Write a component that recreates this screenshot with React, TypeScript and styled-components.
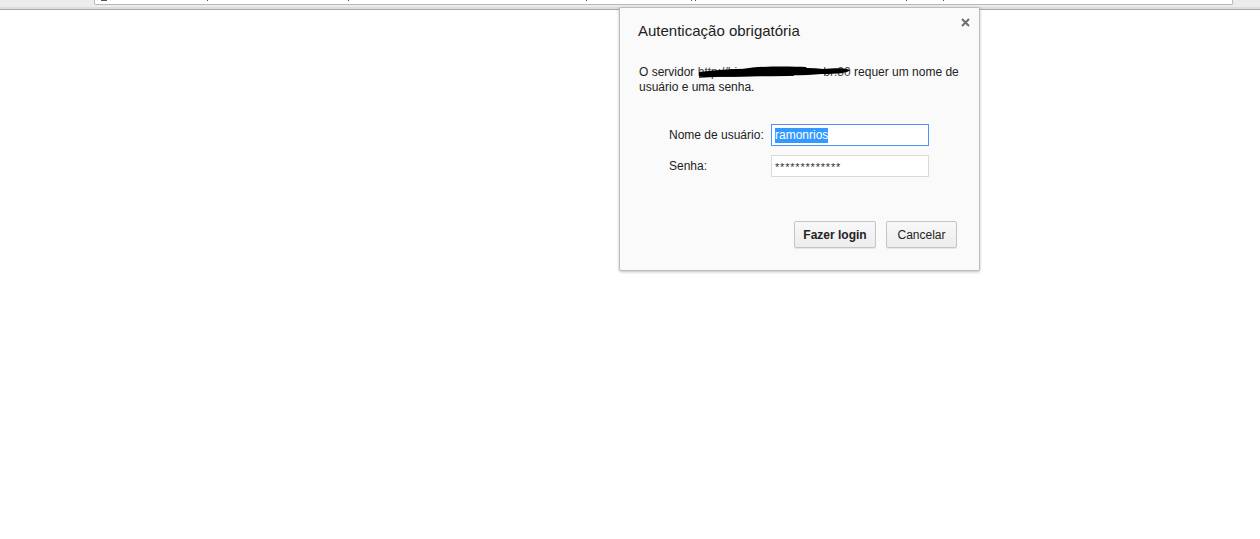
import styled, { createGlobalStyle } from "styled-components";

const GlobalStyle = createGlobalStyle`
  html, body {
    margin: 0;
    padding: 0;
    background: #ffffff;
    font-family: "Liberation Sans", Arial, sans-serif;
  }
  #root {
    position: relative;
    width: 1260px;
    height: 539px;
    overflow: hidden;
  }
`;

const Toolbar = styled.div`
  height: 9px;
  background: #ececec;
  border-bottom: 1px solid #a9a9a9;
  display: flex;
  align-items: flex-end;
  padding: 0 27px 0 94px;
  box-shadow: inset 0 -2px 0 #dcdcdc;
`;

const Omnibox = styled.div`
  flex: 1;
  height: 5px;
  margin-bottom: 4px;
  background: #ffffff;
  border: 1px solid #b9b9b9;
  border-top: none;
  border-radius: 0 0 2px 2px;
  display: flex;
  align-items: flex-start;
`;

const Tick = styled.span<{ $w?: number }>`
  display: block;
  width: ${(p) => p.$w ?? 1}px;
  height: 2px;
  background: #555;
`;

const Page = styled.main`
  height: 529px;
  background: #ffffff;
`;

const Dialog = styled.section`
  position: absolute;
  left: 619px;
  top: 7px;
  width: 361px;
  height: 264px;
  box-sizing: border-box;
  background: #fafafa;
  border: 1px solid #bcbcbc;
  border-radius: 2px;
  box-shadow: 0 1px 3px rgba(0, 0, 0, 0.25);
  padding: 14px 22px 22px 18px;
  display: flex;
  flex-direction: column;
  color: #222;
`;

const Title = styled.h2`
  margin: 0;
  font-size: 15px;
  line-height: 18px;
  font-weight: normal;
  color: #222;
`;

const CloseButton = styled.button`
  position: absolute;
  top: 7px;
  right: 7px;
  width: 14px;
  height: 14px;
  padding: 0;
  border: none;
  background: transparent;
  display: flex;
  align-items: center;
  justify-content: center;
`;

const Message = styled.p`
  margin: 25px 0 0 1px;
  width: 322px;
  font-size: 12px;
  line-height: 15px;
  color: #222;
`;

const Redacted = styled.span`
  position: relative;
  display: inline-flex;
  justify-content: space-between;
  width: 153px;
  vertical-align: top;
  color: #444;
`;

const Scribble = styled.svg`
  position: absolute;
  left: 0;
  top: 0;
  width: 153px;
  height: 15px;
`;

const Form = styled.div`
  margin: 29px 0 0 31px;
  display: grid;
  grid-template-columns: 102px 158px;
  row-gap: 9px;
  align-items: center;
`;

const Label = styled.label`
  font-size: 12px;
  color: #222;
`;

const Field = styled.div<{ $focused?: boolean }>`
  height: 22px;
  box-sizing: border-box;
  background: #ffffff;
  border: 1px solid ${(p) => (p.$focused ? "#4d90fe" : "#d9d9d9")};
  padding: 0 3px;
  display: flex;
  align-items: center;
  font-size: 12px;
  color: #222;
`;

const Selected = styled.span`
  background: #3399ff;
  color: #ffffff;
  line-height: 15px;
`;

const Stars = styled.span`
  font-size: 11px;
  letter-spacing: 0.8px;
  color: #333;
  padding-top: 2px;
`;

const Actions = styled.div`
  margin-top: auto;
  display: flex;
  justify-content: flex-end;
  gap: 10px;
`;

const Button = styled.button<{ $primary?: boolean }>`
  height: 27px;
  width: ${(p) => (p.$primary ? 82 : 71)}px;
  box-sizing: border-box;
  padding: 0;
  font-family: "Liberation Sans", Arial, sans-serif;
  font-size: 12px;
  font-weight: ${(p) => (p.$primary ? "bold" : "normal")};
  color: #222;
  background: linear-gradient(#f8f8f8, #ececec);
  border: 1px solid #c4c4c4;
  border-radius: 2px;
  box-shadow: 0 1px 0 rgba(0, 0, 0, 0.08);
`;

export default function App() {
  return (
    <>
      <GlobalStyle />
      <Toolbar>
        <Omnibox>
          <Tick $w={6} style={{ marginLeft: 6 }} />
          <Tick style={{ marginLeft: 100 }} />
          <Tick style={{ marginLeft: 140 }} />
          <Tick style={{ marginLeft: 237 }} />
          <Tick style={{ marginLeft: 104 }} />
          <Tick style={{ marginLeft: 3 }} />
          <Tick style={{ marginLeft: 210 }} />
          <Tick style={{ marginLeft: 36 }} />
        </Omnibox>
      </Toolbar>
      <Page />
      <Dialog role="dialog">
        <Title>Autenticação obrigatória</Title>
        <CloseButton aria-label="Fechar">
          <svg width="9" height="9" viewBox="0 0 9 9">
            <path d="M1 1 L8 8 M8 1 L1 8" stroke="#6e6e6e" strokeWidth="2" />
          </svg>
        </CloseButton>
        <Message>
          O servidor{" "}
          <Redacted>
            <span>http://bi</span>
            <span>br:80</span>
            <Scribble viewBox="0 0 153 15">
              <path
                d="M1 7 C20 5 40 3 62 4 C82 2 105 2 125 4 C138 3 148 3 152 5 C150 8 140 9 124 9 C105 11 82 10 62 11 C40 12 20 12 1 11 Z"
                fill="#000"
              />
              <path d="M45 4 C60 1 90 1 108 2 L110 6 C90 5 60 5 45 7 Z" fill="#000" />
              <path d="M1 12 C30 10 60 11 96 10" stroke="#000" strokeWidth="1.4" fill="none" />
            </Scribble>
          </Redacted>{" "}
          requer um nome de usuário e uma senha.
        </Message>
        <Form>
          <Label>Nome de usuário:</Label>
          <Field $focused>
            <Selected>ramonrios</Selected>
          </Field>
          <Label>Senha:</Label>
          <Field>
            <Stars>*************</Stars>
          </Field>
        </Form>
        <Actions>
          <Button $primary>Fazer login</Button>
          <Button>Cancelar</Button>
        </Actions>
      </Dialog>
    </>
  );
}
